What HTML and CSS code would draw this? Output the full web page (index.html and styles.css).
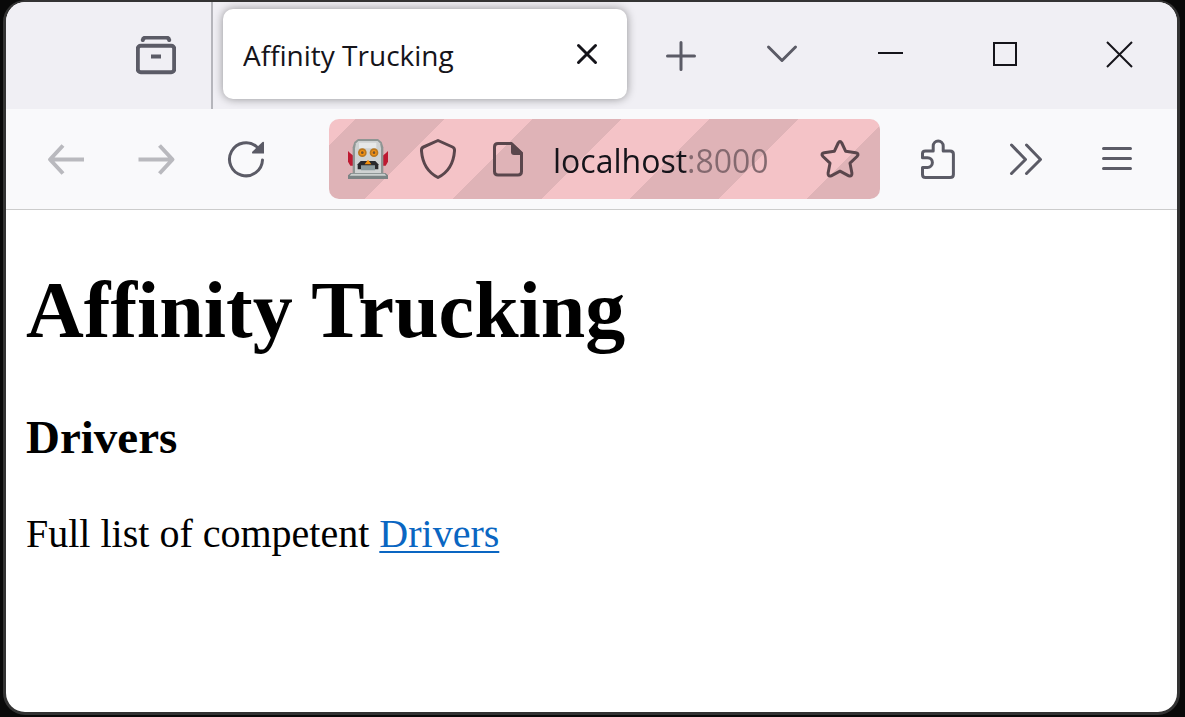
FILE: index.html
```html
<!DOCTYPE html>
<html lang="en">
<head>
<meta charset="utf-8">
<title>Affinity Trucking</title>
<link rel="stylesheet" href="styles.css">
</head>
<body>
<div class="window">
  <header class="tabstrip">
    <div class="pinned">
      <button class="icon-button" type="button" aria-label="Recent browsing">
        <svg class="icon" viewBox="0 0 40 40"><rect x="1.8" y="9.800" width="36.4" height="26.4" rx="3"/><path d="M6.800 4C7.200 2 8 1.600 10 1.600H30C32 1.600 32.800 2 33.200 4"/><path stroke-linecap="butt" d="M15 20.500H25"/></svg>
      </button>
    </div>
    <div class="tab">
      <span class="tab-title">Affinity Trucking</span>
      <button class="tab-close" type="button" aria-label="Close tab">
        <svg class="icon thin" viewBox="0 0 40 40"><path d="M11.500 11.500L28.500 28.500M28.500 11.500L11.500 28.500"/></svg>
      </button>
    </div>
    <div class="tab-actions">
      <button class="strip-button" type="button" aria-label="New tab">
        <svg class="icon light" viewBox="0 0 40 40"><path d="M20 6.500V33.500M6.500 20H33.500"/></svg>
      </button>
      <button class="strip-button" type="button" aria-label="List all tabs">
        <svg class="icon light" viewBox="0 0 40 40"><path d="M6.500 11L20 24.500L33.500 11"/></svg>
      </button>
    </div>
    <div class="window-controls">
      <button class="control" type="button" aria-label="Minimize">
        <svg class="icon hair" viewBox="0 0 40 40"><path d="M8 17H33"/></svg>
      </button>
      <button class="control" type="button" aria-label="Maximize">
        <svg class="icon hair" viewBox="0 0 40 40"><path d="M9 7H31V29H9Z"/></svg>
      </button>
      <button class="control" type="button" aria-label="Close window">
        <svg class="icon hair" viewBox="0 0 40 40"><path d="M7 6L32 31M32 6L7 31"/></svg>
      </button>
    </div>
  </header>

  <nav class="navbar" aria-label="Browser toolbar">
    <button class="icon-button" type="button" aria-label="Back" disabled>
      <svg class="icon light flat" viewBox="0 0 40 40"><path d="M38 20.500H4M17 6.500L4 20.500L17 34.500"/></svg>
    </button>
    <button class="icon-button" type="button" aria-label="Forward" disabled>
      <svg class="icon light flat" viewBox="0 0 40 40"><path d="M2.500 20.500H36M23.500 6.500L36.500 20.500L23.500 34.500"/></svg>
    </button>
    <button class="icon-button" type="button" aria-label="Reload">
      <svg class="icon light" viewBox="0 0 40 40"><path d="M36.500 21A16.500 16.500 0 1 1 31 8"/><path class="fill" d="M38 3.500V14.500H26.500Q25.500 13.800 26.500 12.500L36.500 3Q38 2.400 38 3.500Z"/></svg>
    </button>

    <div class="urlbar">
      <span class="slot">
        <svg class="robot" viewBox="0 0 120 120" role="img" aria-label="Remote control">
          <path fill="#be1931" d="M0 36L6 42L16 50V80H7L0 68ZM120 36L114 42L104 50V80H113L120 68Z"/>
          <path fill="#8f9593" d="M30 0H90L101 9L106 25V104H14V25L19 9Z"/>
          <path fill="#cfd2d2" d="M31 6H89L96 13L99 28V102H21V28L24 13Z"/>
          <path fill="#e6e8e8" d="M33 11H85V28H33Z"/>
          <path fill="#7b8485" d="M8 102H112L120 109V120H0V109Z"/>
          <path fill="#cbd0cf" d="M10 104H110L115 110H5Z"/>
          <circle cx="43" cy="41" r="13" fill="#b97820"/><circle cx="43" cy="41" r="8" fill="#f49212"/><circle cx="43" cy="41" r="4" fill="#735330"/>
          <circle cx="78" cy="41" r="13" fill="#b97820"/><circle cx="78" cy="41" r="8" fill="#f49212"/><circle cx="78" cy="41" r="4" fill="#735330"/>
          <path fill="#29292d" d="M38 66H82L91 76V91H29V76Z"/>
          <path fill="#8b9a9e" d="M39 79H81V94H39Z"/>
          <path fill="#f4900c" d="M60 62L70 76H50Z"/>
        </svg>
      </span>
      <button class="slot" type="button" aria-label="Tracking protection">
        <svg class="icon light" viewBox="0 0 40 40"><path d="M20 1.500L34.500 8Q36.800 9 36.500 12C35.600 24 31 33 20 38.500C9 33 4.400 24 3.500 12Q3.200 9 5.500 8Z"/></svg>
      </button>
      <button class="slot" type="button" aria-label="Site information">
        <svg class="icon light" viewBox="0 0 40 40"><path d="M23.500 4.500H10Q6.500 4.500 6.500 8V32.500Q6.500 36 10 36H30Q33.500 36 33.500 32.500V14Z"/><path class="fill" d="M23 3L35 14V16H26Q23 16 23 13Z"/></svg>
      </button>
      <input class="address" type="text" value="localhost:8000" aria-label="Address" spellcheck="false">
      <button class="bookmark" type="button" aria-label="Bookmark this page">
        <svg class="icon" viewBox="0 0 40 40"><path d="M18.200 4Q20 1 21.800 4L25.700 12.300L35.800 13.800Q39.600 14.600 37 17.500L30 24.200L31.900 34Q32.200 38 28.800 36.800L20 32.200L11.200 36.800Q7.800 38 8.100 34L10 24.200L3 17.500Q.4 14.600 4.200 13.800L14.300 12.300Z"/></svg>
      </button>
    </div>

    <button class="icon-button" type="button" aria-label="Extensions">
      <svg class="icon light" viewBox="0 0 40 40"><path d="M5.500 18.700V14.500Q5.500 12 8.500 12H16.200V7A5 5 0 0 1 26.200 7V12H33Q36.400 12 36.400 15V35.500Q36.400 38.500 33 38.500H8.500Q5.500 38.500 5.500 35.500V28.500H10.500A4.900 4.900 0 0 0 10.500 18.700Z"/></svg>
    </button>
    <button class="icon-button" type="button" aria-label="More tools">
      <svg class="icon light" viewBox="0 0 40 40"><path d="M4.500 6L18.500 20.500L4.500 34.500M19.500 6L33.500 20.500L19.500 34.500"/></svg>
    </button>
    <button class="icon-button" type="button" aria-label="Open application menu">
      <svg class="icon light" viewBox="0 0 40 40"><path d="M6.500 9.500H33.500M6.500 19.500H33.500M6.500 29.500H33.500"/></svg>
    </button>
  </nav>

  <main class="page">
    <h1 class="title">Affinity Trucking</h1>
    <h3 class="subtitle">Drivers</h3>
    <p class="text">Full list of competent <a class="link" href="#drivers">Drivers</a></p>
  </main>
</div>
</body>
</html>
```
FILE: styles.css
```css
* {
  box-sizing: border-box;
}

body {
  margin: 0;
  background: #090909;
  font-family: "Open Sans", "Noto Sans", sans-serif;
}

.window {
  display: flex;
  flex-direction: column;
  min-height: calc(100vh - 2px);
  margin: 0 5px 2px 3px;
  border: 3px solid #333;
  border-top-width: 2px;
  border-radius: 22px;
  background: #fff;
  overflow: hidden;
}

button {
  display: flex;
  align-items: center;
  justify-content: center;
  flex: none;
  padding: 0;
  border: 0;
  background: none;
  color: #5b5b66;
}

.icon {
  width: 40px;
  height: 40px;
  fill: none;
  stroke: currentColor;
  stroke-width: 4;
  stroke-linecap: round;
  stroke-linejoin: round;
}

.icon.light,
.icon.thin {
  stroke-width: 3;
}

.icon.flat {
  stroke-width: 4;
  stroke-linecap: butt;
}

.icon.hair {
  stroke-width: 2;
  stroke-linecap: butt;
  stroke-linejoin: miter;
}

.fill {
  fill: currentColor;
  stroke: none;
}

/* Tab strip */

.tabstrip {
  display: flex;
  height: 107px;
  background: #f0eff4;
}

.pinned {
  display: flex;
  align-items: center;
  justify-content: flex-end;
  width: 207px;
  padding-right: 10px;
  border-right: 2px solid #b5b5bb;
}

.tab {
  display: flex;
  align-items: center;
  flex: 1;
  min-width: 0;
  margin: 7px 4px 10px 10px;
  padding: 0 20px;
  border-radius: 10px;
  background: #fff;
  box-shadow: 0 0 10px rgba(0, 0, 0, 0.4);
}

.tab-title {
  flex: 1;
  padding-top: 2px;
  overflow: hidden;
  white-space: nowrap;
  color: #15141a;
  font-size: 28px;
  line-height: 40px;
}

.tab-close {
  width: 40px;
  height: 40px;
  color: #15141a;
}

.tab-actions {
  display: flex;
  gap: 1px;
}

.strip-button {
  width: 100px;
}

.window-controls {
  display: flex;
}

.control {
  width: 115px;
  color: #15141a;
}

/* Navigation toolbar */

.navbar {
  display: flex;
  align-items: center;
  height: 101px;
  padding: 0 15px;
  border-bottom: 1px solid #ccc;
  background: #f9f9fb;
}

.icon-button {
  width: 90px;
  height: 80px;
}

.icon-button:disabled {
  color: #b9b9be;
}

.urlbar {
  display: flex;
  align-items: center;
  flex: 1;
  min-width: 0;
  height: 80px;
  margin: 0 12px 0 38px;
  padding-left: 4px;
  border-radius: 10px;
  background: repeating-linear-gradient(135deg, #f4c3c7 0 19px, #dfb3b7 19px 82px, #f4c3c7 82px 125px);
}

.slot {
  display: flex;
  align-items: center;
  justify-content: center;
  flex: none;
  width: 70px;
  height: 80px;
  color: #5a464c;
}

.robot {
  width: 40px;
  height: 40px;
}

.address {
  flex: 1;
  min-width: 0;
  height: 80px;
  margin-left: 10px;
  padding: 2px 0 0;
  border: 0;
  outline: 0;
  /* The host is drawn dark and the port is dimmed. */
  background: linear-gradient(90deg, #15141a 135px, #84696f 135px) text;
  color: #15141a;
  -webkit-text-fill-color: transparent;
  font-family: inherit;
  font-size: 32px;
}

.bookmark {
  width: 80px;
  height: 80px;
  color: #5a464c;
}

.bookmark .icon {
  stroke-width: 3;
}

/* Page */

.page {
  flex: 1;
  padding: 54px 20px 20px;
  color: #000;
  font-family: "Liberation Serif", "Times New Roman", serif;
}

.title {
  margin: 0 0 54px;
  font-size: 80px;
  line-height: 92px;
}

.subtitle {
  margin: 0 0 47px;
  font-size: 47px;
  line-height: 54px;
}

.text {
  margin: 0;
  font-size: 40px;
  line-height: 46px;
}

.link {
  color: #0a66c2;
  text-decoration-thickness: 2px;
  text-underline-offset: 4px;
  text-decoration-skip-ink: none;
}
```
